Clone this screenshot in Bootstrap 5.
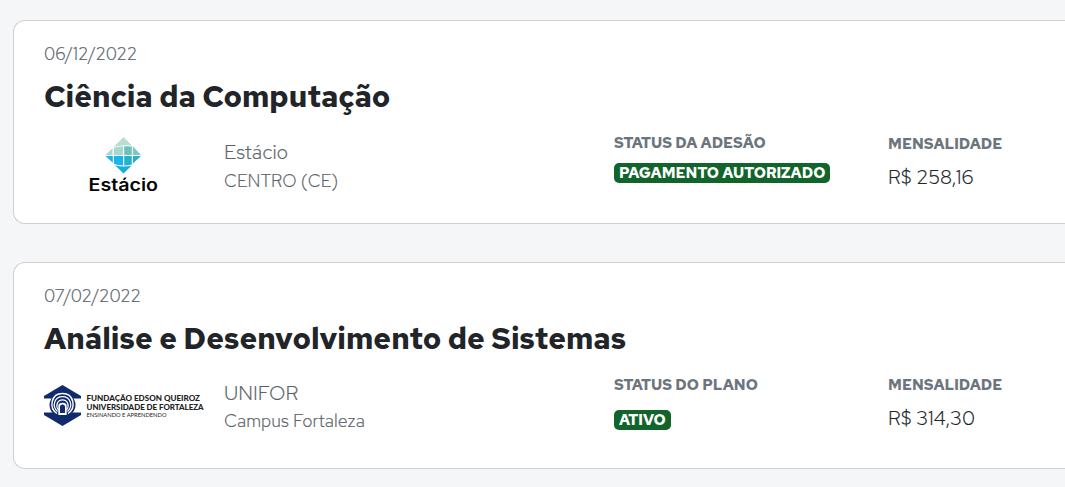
<!DOCTYPE html>
<html lang="pt-BR">
<head>
<meta charset="utf-8">
<meta name="viewport" content="width=device-width, initial-scale=1">
<title>Minhas adesões</title>
<link href="https://cdn.jsdelivr.net/npm/bootstrap@5.3.0/dist/css/bootstrap.min.css" rel="stylesheet">
<style>
body{background:#f5f6f8;font-family:"Red Hat Text","Red Hat Display",Inter,sans-serif;color:#212529;overflow:hidden;height:487px}
.plans{padding:20px 0 0 13px;gap:38px}
.plan{height:204px;padding:20px 0 0 30px;border:1px solid #cfd0d2;border-right:0;border-radius:12px 0 0 12px;background:#fff}
.plan.tall{height:207px}
.date{font-size:17.2px;font-weight:300;line-height:26px;color:#59626a;white-space:nowrap}
.title{font-size:30px;font-weight:700;line-height:36px;margin:11px 0 0;color:#212529;white-space:nowrap}
.info{margin-top:19px;white-space:nowrap}
.logo{width:160px;height:61px;margin-right:20px;flex:none}
.school{width:390px;padding-top:5px;font-weight:300;color:#59626a}
.school .name{font-size:20.300px;line-height:28px}
.school .campus{font-size:17.7px;line-height:28px;padding-top:1px}
.tall .school{padding-top:4px}
.tall .campus{font-size:18px;padding-top:0}
.date,.school,.value{-webkit-text-stroke:.2px currentColor}
.status{width:274px}
.label{font-size:15px;font-weight:700;line-height:20px;color:#6c757d}
.fee{padding-top:1px}
.tall .fee{padding-top:0}
.tag{background:#11642a;border-radius:5px;height:20px;padding:0 5px;margin-top:10px;font-size:15px;font-weight:700;line-height:20px;display:block;width:max-content;text-align:left}
.tall .tag{margin-top:15px}
.value{font-size:20px;font-weight:300;line-height:28px;margin-top:9px;color:#212529}
</style>
</head>
<body>
<main class="plans d-flex flex-column">
  <section class="plan">
    <div class="date">06/12/2022</div>
    <h2 class="title">Ciência da Computação</h2>
    <div class="info d-flex">
      <svg class="logo" viewBox="44 133 160 61" role="img" aria-label="Estácio">
        <path fill="#b9ddd5" d="M123.500 137L132 145.500Q122 144.500 113.500 147Z"/>
        <path fill="#83c6bf" d="M132.800 146.300L141 155H132.800Z"/>
        <path fill="#a7d7cf" d="M112.500 148.200V155H105.500ZM113.800 147.800Q118 146.300 123 146.200V155H113.800Z"/>
        <path fill="#6fbfba" d="M124.200 146.200Q128 146 131.800 146.500V155H124.200Z"/>
        <path fill="#19b5ea" d="M105.500 156H112.800V162.800ZM114 156H123V165.500Q118 165.300 114 164Z"/>
        <path fill="#27b0c9" d="M124.200 156H131.800V164.600Q128 165.600 124.200 165.500ZM133 156H141L133 163.500Z"/>
        <path fill="#14aed9" d="M115 165.300Q123 167.500 131.500 165.700L123.500 173.500Z"/>
        <text x="88.500" y="191" textLength="69.500" lengthAdjust="spacingAndGlyphs" font-family="Inter, sans-serif" font-size="17" font-weight="600" fill="#050505">Estácio</text>
      </svg>
      <div class="school"><div class="name">Estácio</div><div class="campus">CENTRO (CE)</div></div>
      <div class="status"><div class="label">STATUS DA ADESÃO</div><span class="tag text-white">PAGAMENTO AUTORIZADO</span></div>
      <div class="fee"><div class="label">MENSALIDADE</div><div class="value">R$ 258,16</div></div>
    </div>
  </section>
  <section class="plan tall">
    <div class="date">07/02/2022</div>
    <h2 class="title">Análise e Desenvolvimento de Sistemas</h2>
    <div class="info d-flex">
      <svg class="logo" viewBox="44 375 160 61" role="img" aria-label="Fundação Edson Queiroz">
        <path fill="#102a6b" d="M62.500 385L81 396V398.500H44V396ZM44 412.500H81V415L62.500 426L44 415Z"/>
        <ellipse cx="62.500" cy="405" rx="13" ry="12" fill="#102a6b"/>
        <g fill="none" stroke="#fff"><path stroke-width="1.400" d="M57 413.500C48.500 408 51 393.500 62.500 393.500S76.500 408 68 413.500"/><path stroke-width="1.200" d="M57.500 411.500C51.500 406 54.500 396.700 62.500 396.700S73.500 406 67.500 411.500M58.500 410C55 405.500 57.500 399.800 62.500 399.800S70 405.500 66.500 410"/></g>
        <path fill="#fff" d="M58.300 415V406Q58.500 402.800 62.500 402.800T66.700 406V415Z"/><path fill="#102a6b" d="M60 413V407Q60 404.500 62.500 404.500T65 407V413Z"/>
        <g font-family="Lato, sans-serif" fill="#222"><text x="86.500" y="400.900" font-size="7.900" font-weight="900" textLength="113.500" lengthAdjust="spacingAndGlyphs">FUNDAÇÃO EDSON QUEIROZ</text><text x="86.500" y="409.900" font-size="7.900" font-weight="900" textLength="117" lengthAdjust="spacingAndGlyphs">UNIVERSIDADE DE FORTALEZA</text><text x="86.500" y="417.300" font-size="5.400" textLength="80" lengthAdjust="spacingAndGlyphs">ENSINANDO E APRENDENDO</text></g>
      </svg>
      <div class="school"><div class="name">UNIFOR</div><div class="campus">Campus Fortaleza</div></div>
      <div class="status"><div class="label">STATUS DO PLANO</div><span class="tag text-white">ATIVO</span></div>
      <div class="fee"><div class="label">MENSALIDADE</div><div class="value">R$ 314,30</div></div>
    </div>
  </section>
</main>
<script src="https://cdn.jsdelivr.net/npm/bootstrap@5.3.0/dist/js/bootstrap.bundle.min.js"></script>
</body>
</html>
